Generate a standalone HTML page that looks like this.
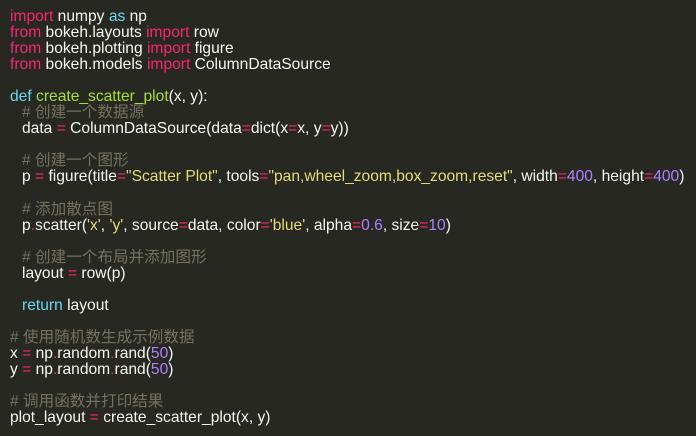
<!DOCTYPE html>
<html><head><meta charset="utf-8"><style>
html,body{margin:0;padding:0;background:#272822;width:696px;height:436px;overflow:hidden}
pre{margin:0;padding:9px 0 0 10px;font-family:"Liberation Sans","Noto Sans CJK SC",sans-serif;font-size:15.6px;line-height:16.04px;color:#f8f8f2;white-space:pre}
.k{color:#f92672}.b{color:#66d9ef}.f{color:#a6e22e}.s{color:#e6db74}.c{color:#75715e}.n{color:#ae81ff}
.i{display:inline-block;width:12px}
</style></head><body><pre><span class="k">import</span> numpy <span class="b">as</span> np
<span class="k">from</span> bokeh.layouts <span class="k">import</span> row
<span class="k">from</span> bokeh.plotting <span class="k">import</span> figure
<span class="k">from</span> bokeh.models <span class="k">import</span> ColumnDataSource

<span class="b">def</span> <span class="f">create_scatter_plot</span>(x, y):
<span class="i"></span><span class="c"># 创建一个数据源</span>
<span class="i"></span>data <span class="k">=</span> ColumnDataSource(data<span class="k">=</span>dict(x<span class="k">=</span>x, y<span class="k">=</span>y))

<span class="i"></span><span class="c"># 创建一个图形</span>
<span class="i"></span>p <span class="k">=</span> figure(title<span class="k">=</span><span class="s">"Scatter Plot"</span>, tools<span class="k">=</span><span class="s">"pan,wheel_zoom,box_zoom,reset"</span>, width<span class="k">=</span><span class="n">400</span>, height<span class="k">=</span><span class="n">400</span>)

<span class="i"></span><span class="c"># 添加散点图</span>
<span class="i"></span>p<span class="k">.</span>scatter(<span class="s">'x'</span>, <span class="s">'y'</span>, source<span class="k">=</span>data, color<span class="k">=</span><span class="s">'blue'</span>, alpha<span class="k">=</span><span class="n">0.6</span>, size<span class="k">=</span><span class="n">10</span>)

<span class="i"></span><span class="c"># 创建一个布局并添加图形</span>
<span class="i"></span>layout <span class="k">=</span> row(p)

<span class="i"></span><span class="b">return</span> layout

<span class="c"># 使用随机数生成示例数据</span>
x <span class="k">=</span> np<span class="k">.</span>random<span class="k">.</span>rand(<span class="n">50</span>)
y <span class="k">=</span> np<span class="k">.</span>random<span class="k">.</span>rand(<span class="n">50</span>)

<span class="c"># 调用函数并打印结果</span>
plot_layout <span class="k">=</span> create_scatter_plot(x, y)</pre></body></html>
